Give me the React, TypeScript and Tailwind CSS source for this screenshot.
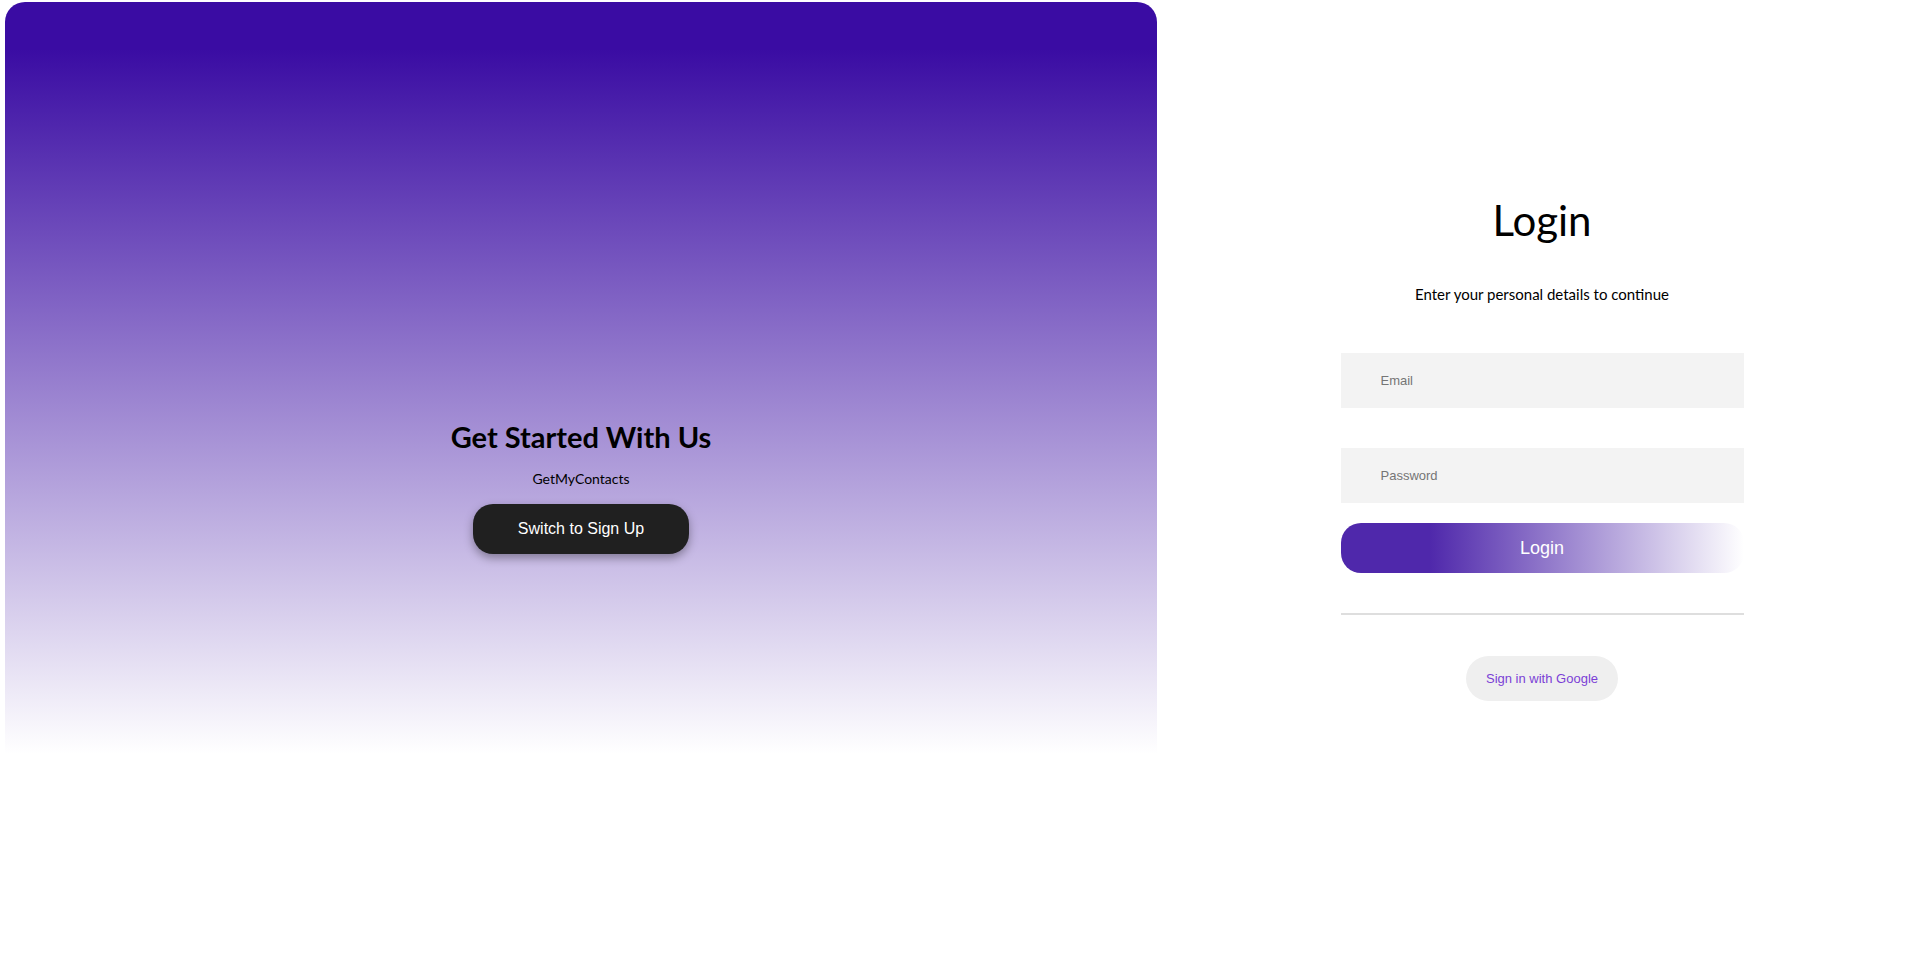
import React from "react";

export default function App() {
  return (
    <div className="w-[1906px] h-[978px] bg-white flex overflow-hidden">
      <div className="ml-[5px] mt-[2px] w-[1152px] h-[952px] rounded-[20px] bg-[linear-gradient(to_bottom,#3a0ca3_5%,#ffffff_79%)] flex flex-col items-center justify-center pt-[16px]">
        <h1 className="font-['Lato',sans-serif] font-bold text-[29px] leading-[36px] text-black">Get Started With Us</h1>
        <p className="mt-[15px] font-['Lato',sans-serif] text-[14px] leading-[18px] text-black">GetMyContacts</p>
        <button className="mt-[16px] h-[50px] px-[45px] rounded-[20px] bg-[#202020] text-white font-['Liberation_Sans',Arial,sans-serif] text-[16px] shadow-[0_4px_10px_rgba(0,0,0,0.35)]">
          Switch to Sign Up
        </button>
      </div>
      <div className="flex-1 pl-[21px] flex flex-col items-center pt-[195px]">
        <h2 className="font-['Lato',sans-serif] text-[42px] leading-[50px] text-black">Login</h2>
        <p className="mt-[40px] font-['Lato',sans-serif] text-[15px] leading-[18px] text-black">Enter your personal details to continue</p>
        <div className="mt-[50px] w-[403px] flex flex-col">
          <input
            placeholder="Email"
            className="h-[55px] w-full bg-[#f3f3f3] pl-[40px] font-['Liberation_Sans',Arial,sans-serif] text-[13px] text-black placeholder:text-[#757575] outline-none"
          />
          <input
            placeholder="Password"
            type="password"
            className="mt-[40px] h-[55px] w-full bg-[#f3f3f3] pl-[40px] font-['Liberation_Sans',Arial,sans-serif] text-[13px] text-black placeholder:text-[#757575] outline-none"
          />
          <button className="mt-[20px] h-[50px] w-full rounded-[20px] bg-[linear-gradient(to_right,#4f28ab_22%,#ffffff_100%)] text-white font-['Liberation_Sans',Arial,sans-serif] text-[18px]">
            Login
          </button>
          <div className="mt-[40px] h-[2px] w-full bg-[#dedede]" />
          <div className="mt-[41px] flex justify-center">
            <button className="h-[45px] px-[20px] rounded-full bg-[#efefef] text-[#7b3fd6] font-['Liberation_Sans',Arial,sans-serif] text-[13px]">
              Sign in with Google
            </button>
          </div>
        </div>
      </div>
    </div>
  );
}
